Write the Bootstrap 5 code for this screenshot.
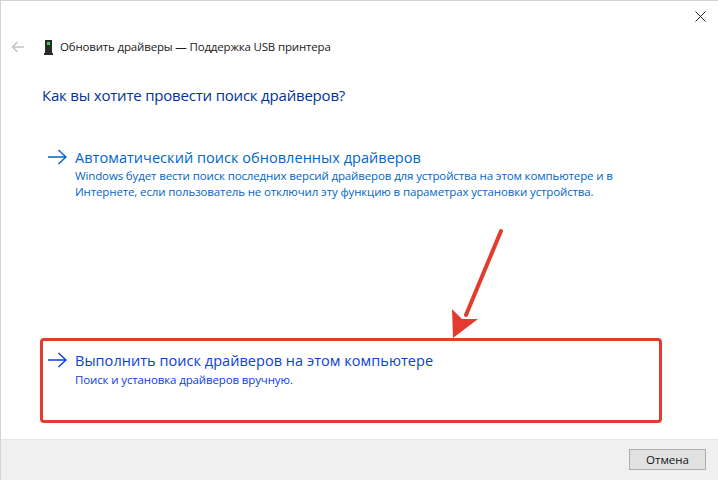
<!DOCTYPE html>
<html lang="ru">
<head>
  <meta charset="UTF-8" />
  <meta name="viewport" content="width=device-width, initial-scale=1.0" />
  <title>Обновить драйверы</title>
  <link href="https://cdn.jsdelivr.net/npm/bootstrap@5.3.2/dist/css/bootstrap.min.css" rel="stylesheet">
  <style>
    html, body { height: 100%; }
    body {
      background: #fff;
      font-family: "Open Sans", "Noto Sans", sans-serif;
      overflow: hidden;
    }
    .dlg-window {
      width: 718px;
      height: 480px;
      border-top: 1px solid #d4d4d4;
      border-left: 1px solid #d4d4d4;
      position: relative;
    }
    .dlg-close { height: 32px; padding: 10px 12px 0 0; }
    .dlg-title-row { height: 28px; padding-left: 10px; font-size: 11.5px; color: #1a1a1a; letter-spacing: -.17px; }
    .dlg-back { width: 13px; margin-right: 20px; }
    .dlg-device { width: 9px; margin-right: 7px; }
    .dlg-main { padding: 24px 0 0 40px; }
    .dlg-heading { font-size: 15px; line-height: 20px; color: #003399; margin: 0 0 42px 1px; font-weight: 400; letter-spacing: -.2px; }
    .cmd-row { color: #0066cc; }
    .cmd-row.cmd-pressed { color: #0a40e0; margin-top: 150px; }
    .cmd-arrow { width: 19px; margin: 2px 8px 0 7px; flex: none; }
    .cmd-title { font-size: 14.5px; line-height: 21px; letter-spacing: .04px; }
    .cmd-pressed .cmd-title { line-height: 22px; }
    .cmd-text { font-size: 11.5px; line-height: 16px; width: 560px; letter-spacing: -.13px; }
    .dlg-footer {
      height: 41px;
      margin-top: auto;
      background: #f0f0f0;
      border-top: 1px solid #e6e6e6;
      padding: 9px 12px 0 0;
    }
    .dlg-cancel {
      width: 77px;
      height: 21px;
      padding: 0;
      border: 1px solid #adadad;
      border-radius: 0;
      background: #e1e1e1;
      color: #111;
      font-size: 11.5px;
      line-height: 19px;
    }
    .mark-box {
      position: absolute;
      left: 39px;
      top: 337px;
      width: 622px;
      height: 85px;
      border: 3px solid #e53b2f;
      border-radius: 4px;
    }
    .mark-arrow { position: absolute; left: 445px; top: 222px; }
  </style>
</head>
<body>
  <div class="dlg-window d-flex flex-column">
    <div class="dlg-close d-flex justify-content-end">
      <svg width="11" height="11" viewBox="0 0 11 11"><path d="M.5.5l10 10M10.500.5l-10 10" stroke="#222" stroke-width="1" fill="none"/></svg>
    </div>
    <div class="dlg-title-row d-flex align-items-center">
      <svg class="dlg-back" height="12" viewBox="0 0 13 12"><path d="M13 6H1.500M6.500 1L1.500 6l5 5" stroke="#c4c4c4" stroke-width="1.600" fill="none"/></svg>
      <svg class="dlg-device" height="15" viewBox="0 0 9 15"><rect x="1" y="0" width="7" height="13" fill="#2b2b2b"/><rect x="0" y="13" width="9" height="2" fill="#2b2b2b"/><rect x="3" y="2" width="3" height="3" fill="#3fd04a"/></svg>
      <span>Обновить драйверы — Поддержка USB принтера</span>
    </div>
    <div class="dlg-main">
      <h1 class="dlg-heading">Как вы хотите провести поиск драйверов?</h1>
      <div class="cmd-row d-flex">
        <svg class="cmd-arrow" height="16" viewBox="0 0 19 16"><path d="M0 8h18M10.500 1l7.500 7-7.500 7" stroke="#0066cc" stroke-width="1.500" fill="none"/></svg>
        <div>
          <div class="cmd-title">Автоматический поиск обновленных драйверов</div>
          <div class="cmd-text">Windows будет вести поиск последних версий драйверов для устройства на этом компьютере и в Интернете, если пользователь не отключил эту функцию в параметрах установки устройства.</div>
        </div>
      </div>
      <div class="cmd-row cmd-pressed d-flex">
        <svg class="cmd-arrow" height="16" viewBox="0 0 19 16"><path d="M0 8h18M10.500 1l7.500 7-7.500 7" stroke="#0a40e0" stroke-width="1.500" fill="none"/></svg>
        <div>
          <div class="cmd-title">Выполнить поиск драйверов на этом компьютере</div>
          <div class="cmd-text">Поиск и установка драйверов вручную.</div>
        </div>
      </div>
    </div>
    <div class="dlg-footer d-flex justify-content-end">
      <button type="button" class="btn dlg-cancel">Отмена</button>
    </div>
    <div class="mark-box"></div>
    <svg class="mark-arrow" width="60" height="116" viewBox="0 0 60 116"><path d="M55 8L20 92" stroke="#e53b2f" stroke-width="4" stroke-linecap="round" fill="none"/><path d="M6 86L7 115L32 96L16 96Z" fill="#e53b2f"/></svg>
  </div>
  <script src="https://cdn.jsdelivr.net/npm/bootstrap@5.3.2/dist/js/bootstrap.bundle.min.js"></script>
</body>
</html>
